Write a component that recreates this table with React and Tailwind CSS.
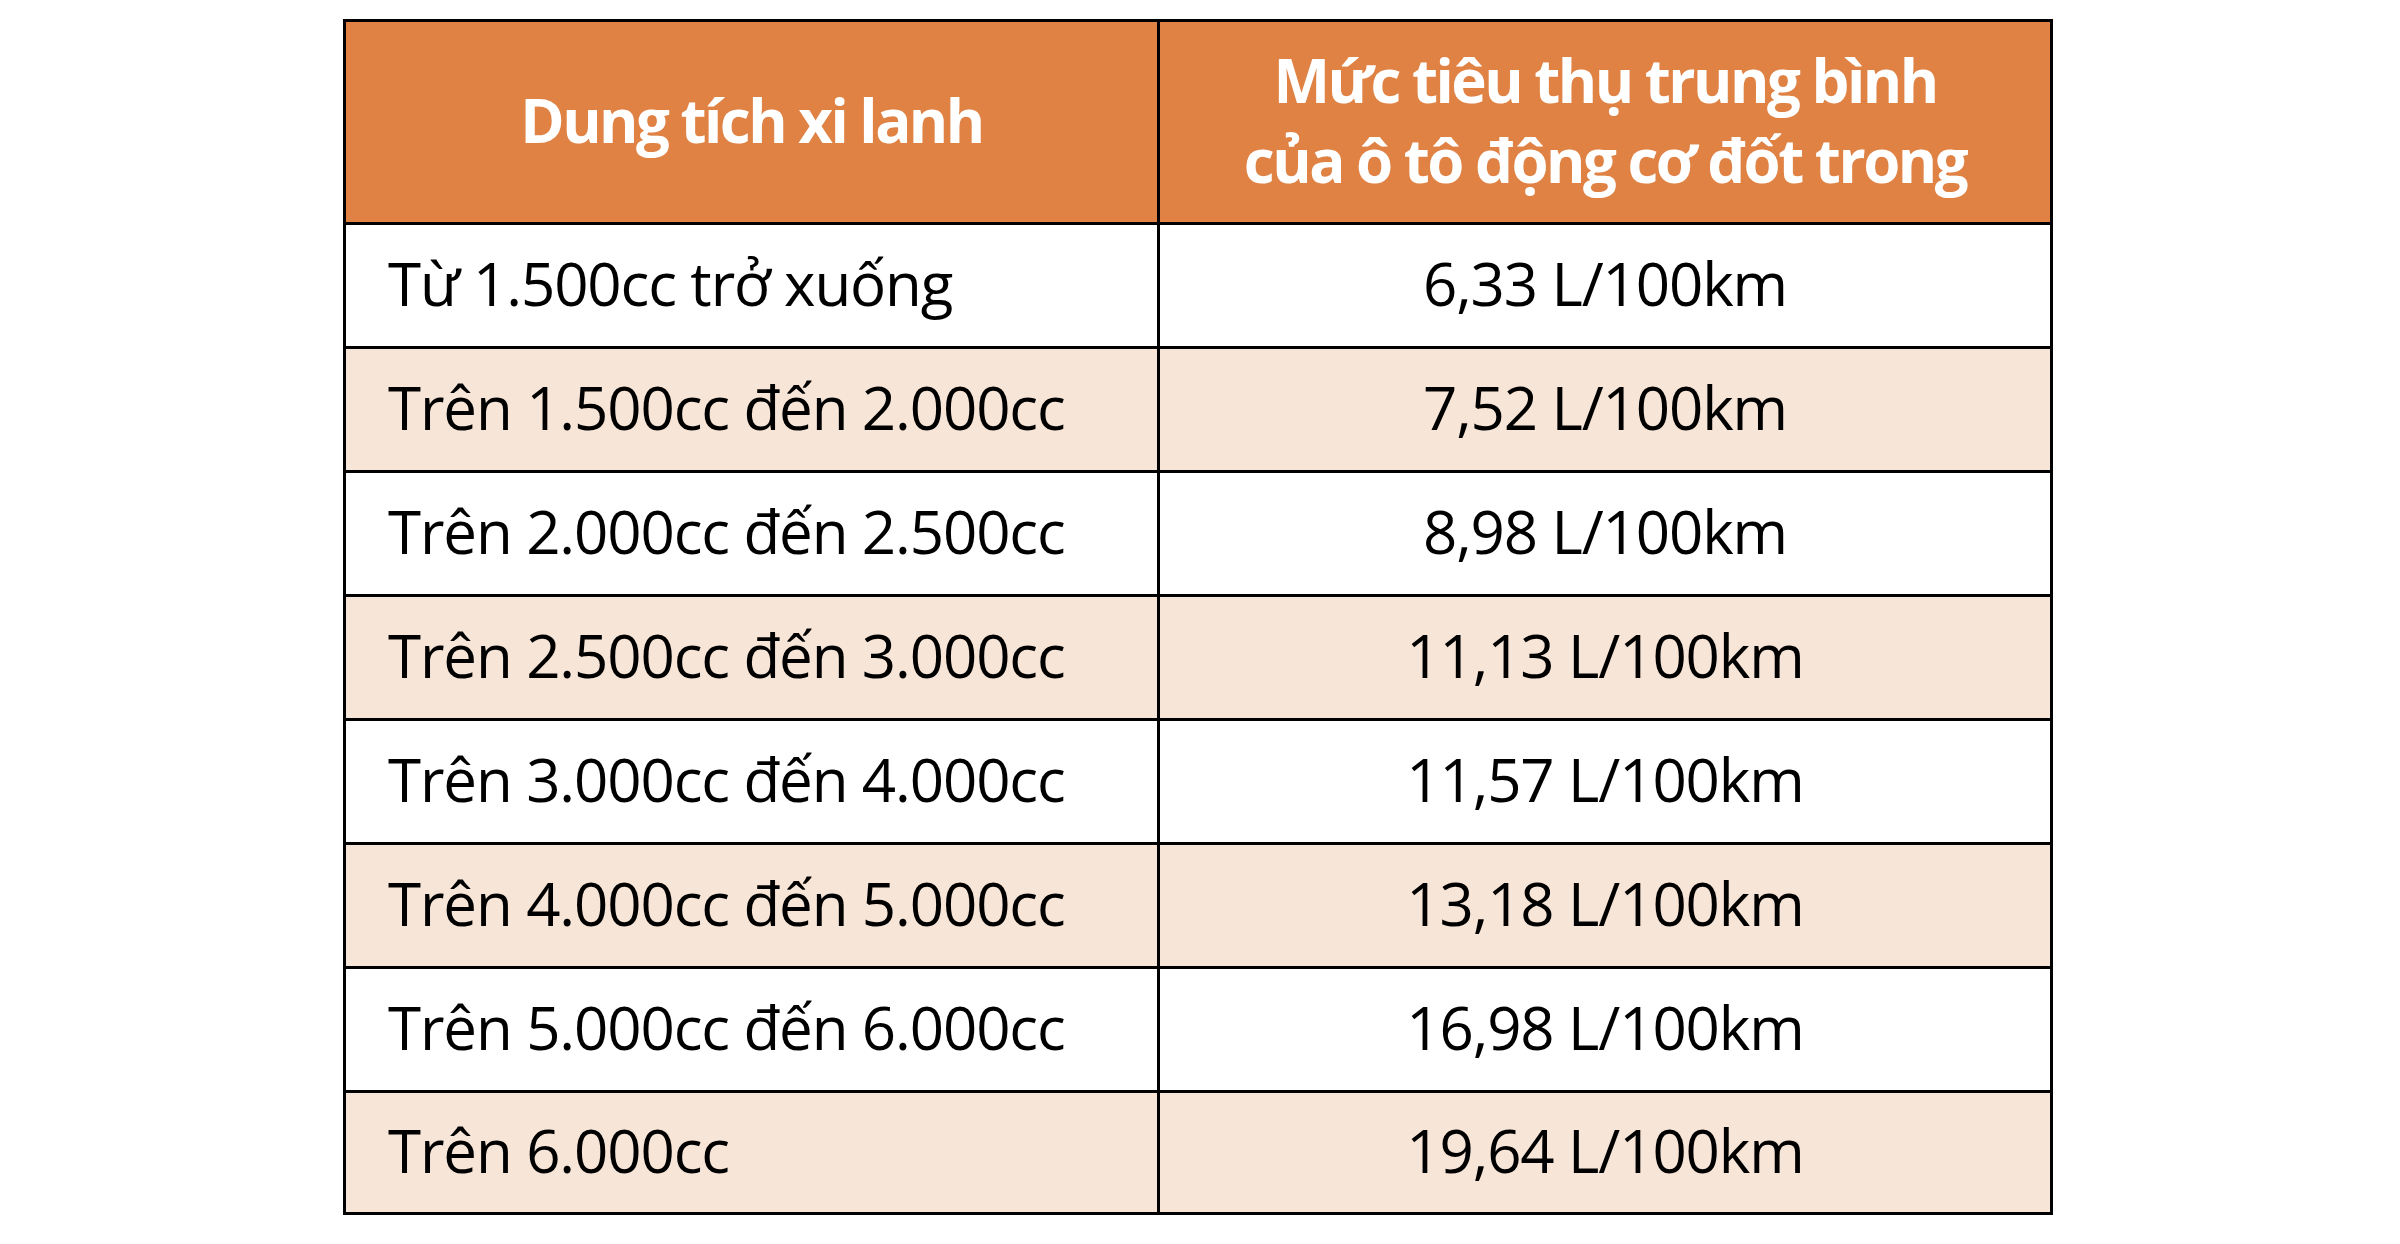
import React from "react";

const rows = [
  ["Từ 1.500cc trở xuống", "6,33 L/100km"],
  ["Trên 1.500cc đến 2.000cc", "7,52 L/100km"],
  ["Trên 2.000cc đến 2.500cc", "8,98 L/100km"],
  ["Trên 2.500cc đến 3.000cc", "11,13 L/100km"],
  ["Trên 3.000cc đến 4.000cc", "11,57 L/100km"],
  ["Trên 4.000cc đến 5.000cc", "13,18 L/100km"],
  ["Trên 5.000cc đến 6.000cc", "16,98 L/100km"],
  ["Trên 6.000cc", "19,64 L/100km"],
];

export default function App() {
  return (
    <div
      className="w-[2400px] h-[1244px] bg-white pt-[19px] pl-[343px]"
      style={{ fontFamily: '"Open Sans", "Noto Sans", sans-serif' }}
    >
      <div className="w-[1710px] border-[3px] border-black flex flex-col">
        <div className="flex h-[203px] border-b-[3px] border-black bg-[#df8244] text-white font-bold text-[60px] tracking-[-2.5px]">
          <div className="w-[814px] shrink-0 border-r-[3px] border-black flex items-center justify-center leading-none pb-[4px]">
            Dung tích xi lanh
          </div>
          <div className="flex-1 flex flex-col items-center justify-center leading-[80px] pb-[4px]">
            <span>Mức tiêu thụ trung bình</span>
            <span>của ô tô động cơ đốt trong</span>
          </div>
        </div>
        {rows.map(([a, b], i) => (
          <div
            key={i}
            className={
              "flex text-black text-[60px] tracking-[-1.1px] leading-none " +
              (i < rows.length - 1 ? "h-[124px] border-b-[3px] border-black " : "h-[119px] ") +
              (i % 2 === 1 ? "bg-[#f7e5d8]" : "bg-white")
            }
          >
            <div className="w-[814px] shrink-0 border-r-[3px] border-black flex items-center pl-[42px] pb-[6px]">
              {a}
            </div>
            <div className="flex-1 flex items-center justify-center pb-[6px]">{b}</div>
          </div>
        ))}
      </div>
    </div>
  );
}
